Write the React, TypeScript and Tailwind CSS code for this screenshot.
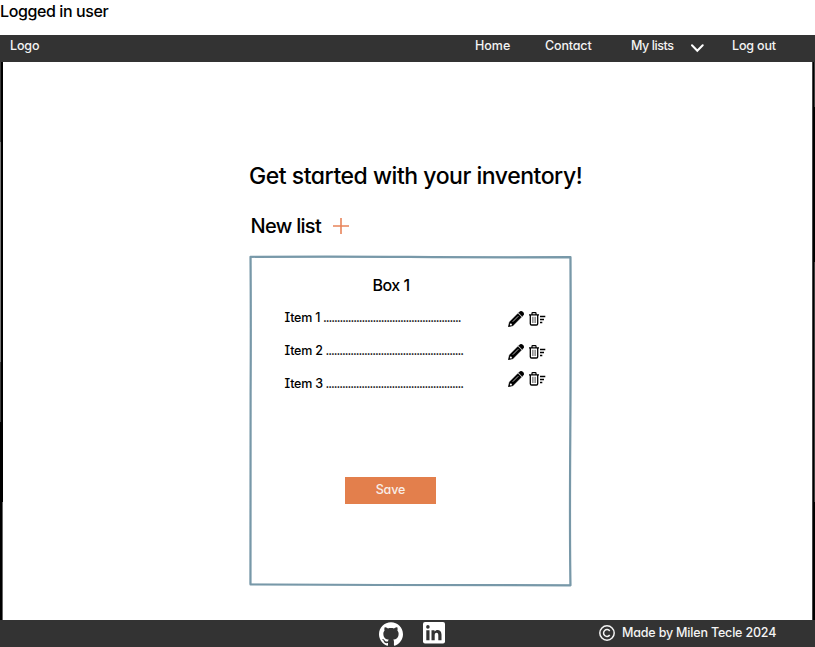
import React from "react";

const font =
  "font-['Inter','Liberation_Sans',sans-serif] [font-feature-settings:'cv11','cv08','calt'_0]";

function Pencil() {
  return (
    <svg className="h-4 w-4" viewBox="0 0 16 16">
      <path
        d="M11.700.7a2 2 0 0 1 2.800 0l.8.8a2 2 0 0 1 0 2.800L14.200 5.400 10.600 1.800ZM9.900 2.500l3.600 3.600-8.600 8.600L.2 15.900 1.400 11.100Z"
        fill="#000"
        stroke="#000"
        strokeWidth=".4"
      />
      <path d="M4.800 10.700 10.300 5.200" stroke="#fff" strokeWidth=".7" />
      <path d="m2.200 12.600 1.500.2.200 1.400-1.500.4-.6-.6Z" fill="#fff" />
    </svg>
  );
}

function Trash() {
  return (
    <svg className="ml-[5px] h-[14px] w-[17px]" viewBox="0 0 17 14" fill="none" stroke="#000">
      <path d="M0 2.900h10M3 2.700V1.300q0-.7.7-.7h2.600q.7 0 .7.700v1.400" strokeWidth="1.200" />
      <path d="M1.300 3v8.700q0 1.300 1.300 1.300h4.800q1.300 0 1.300-1.300V3" strokeWidth="1.300" />
      <path d="M3.900 4.800v6.200M6.100 4.800v6.200" strokeWidth=".7" />
      <path d="M11 4.500h5.300M11 7.500h4M11 10.500h2.300" strokeWidth="1.300" />
    </svg>
  );
}

function Item({ label, labelClass, iconClass }: { label: string; labelClass: string; iconClass: string }) {
  return (
    <div className="flex h-[33px] items-start whitespace-nowrap text-[12.5px] leading-4">
      <span className={"tracking-[-0.200px] " + labelClass}>{label}</span>
      <span className="w-[137px] tracking-[-1.040px]">{".".repeat(50)}</span>
      <span className={"ml-auto flex items-center " + iconClass}>
        <Pencil />
        <Trash />
      </span>
    </div>
  );
}

export default function App() {
  return (
    <div className={"flex h-[647px] w-[815px] flex-col overflow-hidden bg-white font-medium text-black " + font}>
      <div className="h-[35px] pt-px text-base leading-5 tracking-[-0.400px]">Logged in user</div>
      <header className="flex h-[27px] shrink-0 items-start bg-[#333] pl-[10px] pt-[3px] text-[12.500px] leading-4 whitespace-nowrap text-[#f4f4f4]">
        <span className="w-[465px] tracking-[-0.150px]">Logo</span>
        <span className="w-[70px]">Home</span>
        <span className="w-[86px] tracking-[-0.150px]">Contact</span>
        <span className="w-[60px] tracking-[-0.420px]">My lists</span>
        <svg className="mt-[6px] h-[9px] w-[13px]" viewBox="0 0 13 9">
          <path d="m1 1.300 5.300 5.500 5.400-5.500" fill="none" stroke="#fff" strokeWidth="2" strokeLinecap="round" />
        </svg>
        <span className="ml-[28px] tracking-[-0.150px]">Log out</span>
      </header>
      <main className="relative flex-1 pl-[249px]">
        <svg className="absolute inset-0 h-[558px] w-[815px]" viewBox="0 0 815 558">
          <path d="M0 0H3V558H0Z" fill="#000" />
          <path d="M0 0H1V80H0ZM0 300H1V360H0Z" fill="#3c3c3c" />
          <path d="M0 80H1V300H0Z" fill="#777" />
          <path d="M2 440H3V558H2Z" fill="#666" />
          <path d="M812 0H815V558H812Z" fill="#000" />
          <path d="M812 0H813V558H812Z" fill="#444" />
          <path d="M814 0H815V45H814ZM814 200H815V440H814Z" fill="#3c3c3c" />
        </svg>
        <h1 className="pt-[98px] text-[23px] leading-8 tracking-[-0.470px] whitespace-nowrap">
          Get started with your inventory!
        </h1>
        <div className="mt-[20px] flex h-7 items-center text-[20px] leading-7">
          <h2 className="w-[84px] pl-[1.500px] whitespace-nowrap tracking-[-0.700px]">New list</h2>
          <svg className="h-4 w-4" viewBox="0 0 16 16">
            <path d="M8 0V16M0 8H16" stroke="#e8845a" strokeWidth="1.600" />
          </svg>
        </div>
        <section className="relative mt-[15px] flex h-[332px] w-[323px] flex-col pt-[20px]">
          <svg className="absolute inset-0 h-[332px] w-[323px]" viewBox="0 0 323 332" fill="none">
            <path
              d="M1.500 1.800Q90 1.300 160 1.900T321.500 2.200Q322 80 321.300 180T321.500 330.300Q210 330.500 130 330T1.500 329.500Q1.200 220 1.600 140T1.500 1.800Z"
              stroke="#7899a9"
              strokeWidth="2.200"
              strokeLinejoin="round"
            />
            <path d="M2 2.500 321 1.500V330L1 329Z" stroke="#7899a9" strokeOpacity=".35" strokeWidth="1" />
          </svg>
          <h3 className="h-[35px] pl-[123.500px] text-[16px] leading-5 tracking-[-0.500px]">Box 1</h3>
          <div className="pl-[35.500px] pr-[26px]">
            <Item label="Item 1" labelClass="w-[38.500px]" iconClass="mt-[1px]" />
            <Item label="Item 2" labelClass="w-[41px]" iconClass="mt-[1px]" />
            <Item label="Item 3" labelClass="w-[41px]" iconClass="mt-[-5px]" />
          </div>
          <button className="mt-[68px] ml-[96px] h-[27px] w-[91px] bg-[#e37f4c] pb-px text-[12.500px] leading-4 tracking-[-0.100px] text-[#f8eee9]">
            Save
          </button>
        </section>
      </main>
      <footer className="flex h-[27px] shrink-0 items-center bg-[#333] pl-[379px] text-[12.500px] leading-4 text-[#f4f4f4]">
        <svg className="mt-px h-6 w-6" viewBox="0 0 24 24" fill="#fff">
          <path d="M12 .297c-6.630 0-12 5.373-12 12 0 5.303 3.438 9.800 8.205 11.385.6.113.820-.258.820-.577 0-.285-.010-1.040-.015-2.040-3.338.724-4.042-1.610-4.042-1.610C4.422 18.070 3.633 17.700 3.633 17.700c-1.087-.744.084-.729.084-.729 1.205.084 1.838 1.236 1.838 1.236 1.070 1.835 2.809 1.305 3.495.998.108-.776.417-1.305.760-1.605-2.665-.300-5.466-1.332-5.466-5.930 0-1.310.465-2.380 1.235-3.220-.135-.303-.540-1.523.105-3.176 0 0 1.005-.322 3.300 1.230.960-.267 1.980-.399 3-.405 1.020.006 2.040.138 3 .405 2.280-1.552 3.285-1.230 3.285-1.230.645 1.653.240 2.873.120 3.176.765.840 1.230 1.910 1.230 3.220 0 4.610-2.805 5.625-5.475 5.920.420.360.810 1.096.810 2.220 0 1.606-.015 2.896-.015 3.286 0 .315.210.690.825.570C20.565 22.092 24 17.592 24 12.297c0-6.627-5.373-12-12-12" />
        </svg>
        <svg className="-mt-px ml-5 h-[22px] w-[22px]" viewBox="0 0 22 22">
          <rect width="22" height="21.500" rx="2" fill="#fff" />
          <path d="M3.300 8.200h3.200v10H3.300ZM8.500 8.200h3v1.400c1.700-2.800 7-2.200 7 2.800v5.800h-3.200v-5c0-3.300-3.600-3-3.600 0v5H8.500Z" fill="#333" />
          <circle cx="4.900" cy="4.900" r="1.800" fill="#333" />
        </svg>
        <svg className="-mt-px ml-[154px] h-4 w-4" viewBox="0 0 16 16" fill="none" stroke="#f4f4f4" strokeWidth="1.500">
          <circle cx="8" cy="8" r="7.200" />
          <path d="M10.700 6a3.400 3.400 0 1 0 0 4" />
        </svg>
        <span className="-mt-0.5 ml-[7px] whitespace-nowrap tracking-[-0.180px]">Made by Milen Tecle 2024</span>
      </footer>
    </div>
  );
}
